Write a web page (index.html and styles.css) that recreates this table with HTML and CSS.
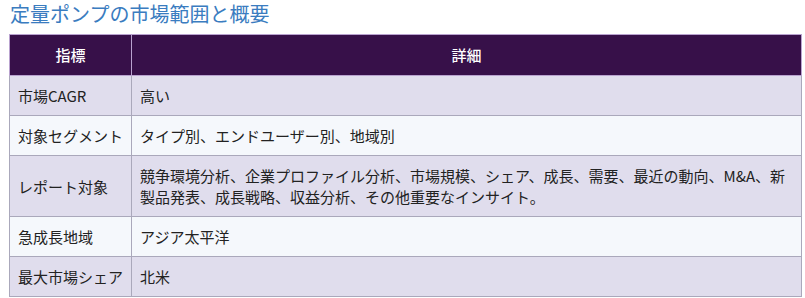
FILE: index.html
```html
<!DOCTYPE html>
<html lang="ja">
<head>
<meta charset="utf-8">
<link rel="stylesheet" href="styles.css">
</head>
<body>
<div class="page">
  <h2 class="title">定量ポンプの市場範囲と概要</h2>
  <table class="summary">
    <thead>
      <tr><th class="c1">指標</th><th>詳細</th></tr>
    </thead>
    <tbody>
      <tr class="odd"><td class="c1">市場CAGR</td><td>高い</td></tr>
      <tr class="even"><td class="c1">対象セグメント</td><td>タイプ別、エンドユーザー別、地域別</td></tr>
      <tr class="odd"><td class="c1">レポート対象</td><td>競争環境分析、企業プロファイル分析、市場規模、シェア、成長、需要、最近の動向、M&amp;A、新製品発表、成長戦略、収益分析、その他重要なインサイト。</td></tr>
      <tr class="even"><td class="c1">急成長地域</td><td>アジア太平洋</td></tr>
      <tr class="odd"><td class="c1">最大市場シェア</td><td>北米</td></tr>
    </tbody>
  </table>
</div>
</body>
</html>
```

FILE: styles.css
```css
html, body {
  margin: 0;
  padding: 0;
  background: #ffffff;
}
.page {
  padding: 0 3px 0 9px;
  font-family: "Noto Sans CJK JP", "Noto Sans", sans-serif;
}
.title {
  margin: 0;
  padding: 0 0 0 1px;
  height: 34px;
  font-size: 20px;
  font-weight: 400;
  line-height: 28px;
  color: #3a7cc0;
}
.summary {
  width: 793px;
  border-collapse: collapse;
  table-layout: fixed;
  font-size: 15px;
  color: #222222;
}
.summary th {
  background: #371049;
  color: #ffffff;
  font-weight: 500;
  height: 40px;
  padding: 0 8px;
  border: 1px solid #b9a2cf;
  text-align: center;
  line-height: 22px;
}
.summary td {
  border: 1px solid #aaa8bb;
  padding: 9px 8px;
  line-height: 21px;
  vertical-align: middle;
}
.summary .c1 {
  width: 105px;
}
.summary tr.odd td {
  background: #e0dded;
}
.summary tr.even td {
  background: #f5f8fc;
}
```
